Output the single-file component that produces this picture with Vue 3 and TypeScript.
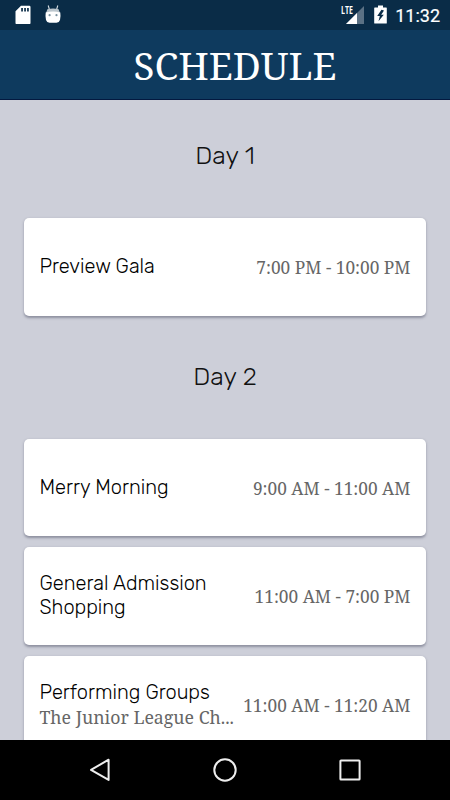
<script setup lang="ts">
interface ScheduleEvent {
  title: string
  time: string
  detail?: string
}

interface ScheduleDay {
  label: string
  events: ScheduleEvent[]
}

const days: ScheduleDay[] = [
  {
    label: 'Day 1',
    events: [{ title: 'Preview Gala', time: '7:00 PM - 10:00 PM' }],
  },
  {
    label: 'Day 2',
    events: [
      { title: 'Merry Morning', time: '9:00 AM - 11:00 AM' },
      { title: 'General Admission Shopping', time: '11:00 AM - 7:00 PM' },
      { title: 'Performing Groups', time: '11:00 AM - 11:20 AM', detail: 'The Junior League Ch...' },
    ],
  },
]
</script>

<template>
  <div class="screen">
    <div class="status">
      <svg class="sd" viewBox="0 0 16 20" width="16" height="20">
        <path d="M6 .7h8.3a1.2 1.2 0 0 1 1.2 1.2v16a1.2 1.2 0 0 1-1.2 1.2H1.7a1.2 1.2 0 0 1-1.2-1.2V6.2z" fill="#fff" />
        <path d="M6.2 3h1.7v3.5H6.2zM9.2 3h1.7v3.5H9.2zM12.1 3h1.7v3.5h-1.7z" fill="#0a2c47" />
      </svg>
      <svg class="robot" viewBox="0 0 16 19" width="16" height="19">
        <path d="M3.2.5l1.2 4M12.8.5l-1.2 4" stroke="#d5dce1" stroke-width="1.1" />
        <path d="M2.4 4.2Q8 2.8 13.6 4.2L15 8H1z" fill="#bcc6cd" />
        <path d="M.7 7.5Q8 5.7 15.3 7.5Q15.9 11 15 15Q14.2 17.7 11.5 17.7H4.5Q1.8 17.7 1 15Q.1 11 .7 7.5z" fill="#fff" />
        <circle cx="4.6" cy="10.2" r="1.1" fill="#78909e" />
        <circle cx="11.5" cy="10.2" r="1.1" fill="#78909e" />
      </svg>
      <span class="spacer"></span>
      <span class="network">
        <svg viewBox="0 0 18 18" width="18" height="18">
          <path d="M18 0v18H0z" fill="#5b7184" />
          <path d="M11 7v11H0z" fill="#fff" />
        </svg>
        <span class="lte">LTE</span>
      </span>
      <svg class="battery" viewBox="0 0 13 19" width="13" height="19">
        <path d="M4 .5h5v2h3.2q.6 0 .6.6v14.8q0 .6-.6.6H.8q-.6 0-.6-.6V3.1q0-.6.6-.6H4z" fill="#fff" />
        <path d="M7.5 4.8L3.2 11h2.6l-1.3 5.2L9.8 9.7H7.2L10 5.5z" fill="#0a2c47" />
      </svg>
      <span class="clock">11:32</span>
    </div>
    <header class="header"><h1>SCHEDULE</h1></header>
    <main class="content">
      <section v-for="day in days" :key="day.label" class="day">
        <h2>{{ day.label }}</h2>
        <div class="cards">
          <article v-for="event in day.events" :key="event.title" class="card">
            <div class="info">
              <h3>{{ event.title }}</h3>
              <p v-if="event.detail" class="detail">{{ event.detail }}</p>
            </div>
            <time>{{ event.time }}</time>
          </article>
        </div>
      </section>
    </main>
    <nav class="nav">
      <svg viewBox="0 0 26 26" width="26" height="26"><path d="M21.6 2.7v20.2L4 12.9z" /></svg>
      <svg viewBox="0 0 26 26" width="26" height="26"><circle cx="13" cy="13" r="10.7" /></svg>
      <svg viewBox="0 0 26 26" width="26" height="26"><rect x="3.4" y="3.4" width="19.2" height="19.2" rx=".6" /></svg>
    </nav>
  </div>
</template>

<style>
body {
  margin: 0;
}
</style>

<style scoped>
.screen {
  display: flex;
  flex-direction: column;
  width: 450px;
  height: 800px;
  overflow: hidden;
  background: #cdcfd9;
  font-family: Rubik, Roboto, sans-serif;
}
h1, h2, h3, p {
  margin: 0;
  font-weight: 400;
}
svg {
  display: block;
  flex: none;
}
.status {
  display: flex;
  flex: none;
  box-sizing: border-box;
  height: 30px;
  padding: 5px 10px 0 14.5px;
  background: #0a2c47;
  color: #fff;
}
.robot {
  margin-left: 14px;
}
.spacer {
  flex: 1;
}
.network {
  position: relative;
  margin-top: 1px;
}
.lte {
  position: absolute;
  top: -1px;
  left: -4.5px;
  font: 700 11px/10px "Open Sans", sans-serif;
  transform: scaleX(0.64);
  transform-origin: left;
}
.battery {
  margin-left: 10px;
}
.clock {
  margin-left: 8.5px;
  font: 400 18px/22px Roboto, sans-serif;
  -webkit-text-stroke: 0.2px #fff;
}
.header {
  flex: none;
  box-sizing: border-box;
  height: 70px;
  padding-left: 20px;
  border-bottom: 1px solid #031940;
  background: #0e3a5e;
  color: #fff;
  text-align: center;
}
h1 {
  font: 400 38.6px/70px "Noto Serif", "Droid Serif", "Liberation Serif", serif;
}
.content {
  flex: 1;
  min-height: 0;
  overflow: hidden;
  padding: 0 24px;
}
h2 {
  box-sizing: border-box;
  height: 118px;
  padding-top: 40px;
  color: #111;
  font-size: 25.2px;
  font-weight: 300;
  line-height: 30px;
  text-align: center;
}
.day + .day h2 {
  height: 123px;
  padding-top: 45px;
}
.cards {
  display: flex;
  flex-direction: column;
  gap: 11px;
}
.card {
  display: flex;
  flex: none;
  align-items: center;
  justify-content: space-between;
  box-sizing: border-box;
  height: 97.5px;
  padding: 0 15.5px;
  border-radius: 5px;
  background: #fff;
  box-shadow: 0 1.5px 2.5px rgba(20, 22, 50, 0.34);
}
.info {
  width: 196px;
  padding-bottom: 1px;
}
h3 {
  color: #000;
  font-size: 20px;
  font-weight: 300;
  line-height: 24px;
}
.detail,
time {
  color: #666;
  font: 400 17.3px/26px "Noto Serif", "Droid Serif", "Liberation Serif", serif;
  white-space: nowrap;
}
.detail {
  margin-bottom: -2px;
  font-size: 17.7px;
}
time {
  padding-top: 3px;
}
.nav {
  display: flex;
  flex: none;
  align-items: center;
  justify-content: space-between;
  box-sizing: border-box;
  height: 60px;
  padding: 0 87px;
  background: #000;
}
.nav svg {
  fill: none;
  stroke: #eee;
  stroke-width: 2;
  stroke-linejoin: round;
}
</style>
